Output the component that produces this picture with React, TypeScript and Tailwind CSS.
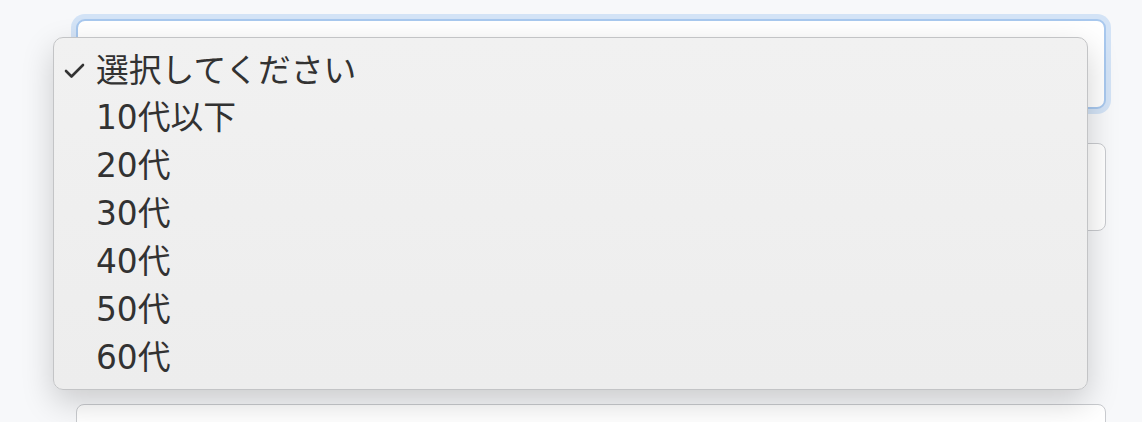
const options = ["選択してください", "10代以下", "20代", "30代", "40代", "50代", "60代"];

function Check() {
  return (
    <svg width="21" height="16" viewBox="0 0 21 16" className="shrink-0">
      <path
        d="M2 8 L7.5 13.5 L19 2"
        fill="none"
        stroke="#333333"
        strokeWidth="2.6"
        strokeLinecap="round"
        strokeLinejoin="round"
      />
    </svg>
  );
}

export default function App() {
  return (
    <main
      className="relative h-[422px] w-full overflow-hidden bg-[#f7f8fa]"
      style={{ fontFamily: '"DejaVu Sans", "Noto Sans CJK JP", sans-serif' }}
    >
      {/* form fields */}
      <div className="ml-[76px] flex w-[1030px] flex-col pt-[19px]">
        <div className="h-[90px] rounded-[9px] border-2 border-[#a8c8ee] bg-white ring-[5px] ring-[#d3e3f6]" />
        <div className="mt-[34px] h-[88px] rounded-[8px] border-[1.5px] border-[#c9cbcf] bg-white" />
        <div className="mt-[173px] h-[40px] rounded-[8px] border-[1.5px] border-[#c9cbcf] bg-white" />
      </div>

      {/* native select menu */}
      <div className="absolute left-[53px] top-[37px] flex h-[353px] w-[1035px] flex-col rounded-[10px] border border-[#c3c4c6] bg-gradient-to-b from-[#f1f1f1] to-[#ededed] pb-[7px] pt-[9px] shadow-[0_12px_32px_rgba(0,0,0,0.18)]">
        {options.map((opt, i) => (
          <div key={opt} className="flex h-[48px] items-center">
            <div className="flex w-[42px] pl-[10px]">{i === 0 && <Check />}</div>
            <span className="text-[32.8px] leading-none text-[#323232]">{opt}</span>
          </div>
        ))}
      </div>
    </main>
  );
}
